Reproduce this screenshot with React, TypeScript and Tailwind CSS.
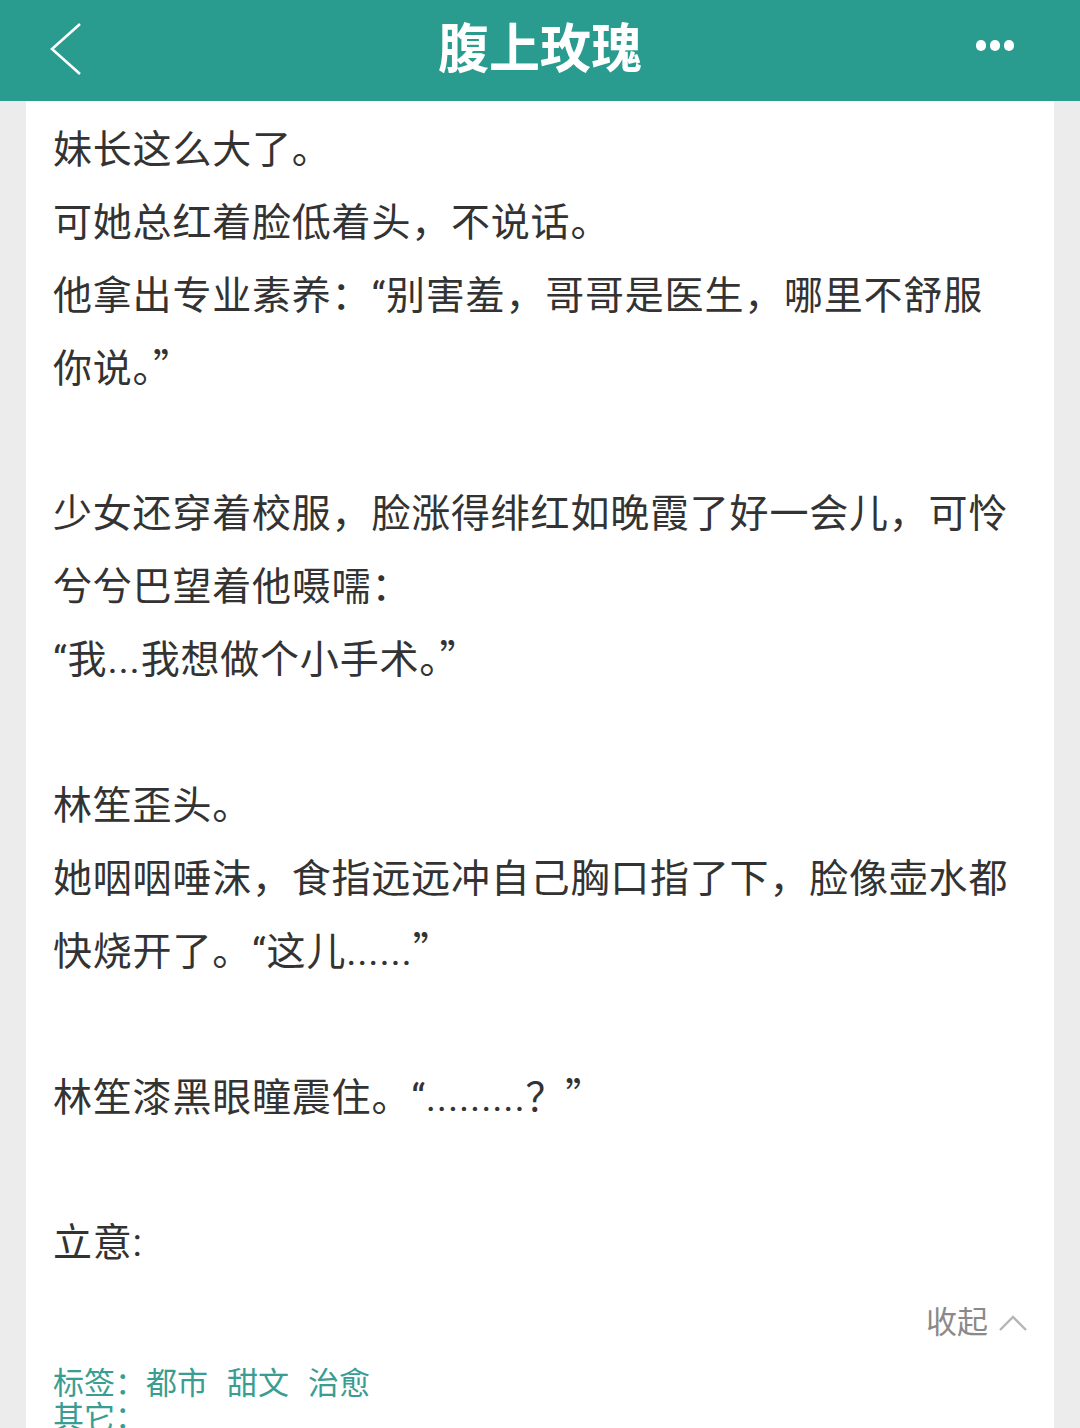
import React from 'react'

// novel excerpt, one entry per rendered line ('' = blank line)
const lines: string[] = [
    '妹长这么大了。',
    '可她总红着脸低着头，不说话。',
    '他拿出专业素养：“别害羞，哥哥是医生，哪里不舒服',
    '你说。”',
    '',
    '少女还穿着校服，脸涨得绯红如晚霞了好一会儿，可怜',
    '兮兮巴望着他嗫嚅：',
    '“我...我想做个小手术。”',
    '',
    '林笙歪头。',
    '她咽咽唾沫，食指远远冲自己胸口指了下，脸像壶水都',
    '快烧开了。“这儿......”',
    '',
    '林笙漆黑眼瞳震住。“.........？”',
    '',
    '立意:',
]

const tags = ['都市', '甜文', '治愈']

const font = "font-['Roboto','Noto_Sans_CJK_SC',sans-serif]"

// closing quotes take the full-width CJK glyph, opening ones stay narrow
const renderLine = (line: string) =>
    line.split('”').map((part, i, arr) => (
        <React.Fragment key={i}>
            {part}
            {i < arr.length - 1 && <span className="leading-none font-['Noto_Sans_CJK_SC',sans-serif]">”</span>}
        </React.Fragment>
    ))

const Header = () => (
    <div className="h-[101px] bg-[#2a9c8f] flex items-center justify-between px-[44px] relative">
        <svg width="40" height="56" viewBox="0 0 40 56" className="ml-[2px] -mt-[4px]">
            <path d="M34 3 L6 28 L34 53" fill="none" stroke="white" strokeWidth="2.6" />
        </svg>
        <h1 className="absolute left-0 right-0 text-center text-white text-[51px] font-bold font-['Noto_Sans_CJK_SC',sans-serif] leading-none -mt-[10px] scale-y-105 pointer-events-none">
            腹上玫瑰
        </h1>
        <div className="flex gap-[4px] mr-[22px] -mt-[10px]">
            <span className="w-[10px] h-[11px] rounded-full bg-white" />
            <span className="w-[10px] h-[11px] rounded-full bg-white" />
            <span className="w-[10px] h-[11px] rounded-full bg-white" />
        </div>
    </div>
)

const App = () => {
    return (
        <div className={`w-[1080px] h-[1428px] overflow-hidden bg-[#ececec] ${font}`}>
            <Header />
            <div className="mx-[26px] bg-white h-[1327px] pl-[27px] pr-[26px] pt-[13px]">
                <div className="text-[39px] tracking-[0.8px] leading-[72.9px] text-[#333333]">
                    {lines.map((line, index) => (
                        <div key={index} className="whitespace-nowrap h-[72.9px]">{renderLine(line)}</div>
                    ))}
                </div>

                <div className="flex justify-end items-center gap-[10px] mt-[20px] text-[31px] text-[#8a8a8a]">
                    <span>收起</span>
                    <svg width="30" height="20" viewBox="0 0 30 20" className="-mt-[2px]">
                        <path d="M2 17 L15 4 L28 17" fill="none" stroke="#b5b5b5" strokeWidth="2.4" />
                    </svg>
                </div>

                <div className="mt-[20px] text-[31px] leading-[34px] text-[#3a9d92]">
                    <div className="flex">
                        <span>标签：</span>
                        <div className="flex gap-[19px]">
                            {tags.map(tag => <span key={tag}>{tag}</span>)}
                        </div>
                    </div>
                    <div>其它：</div>
                </div>
            </div>
        </div>
    )
}

export default App
